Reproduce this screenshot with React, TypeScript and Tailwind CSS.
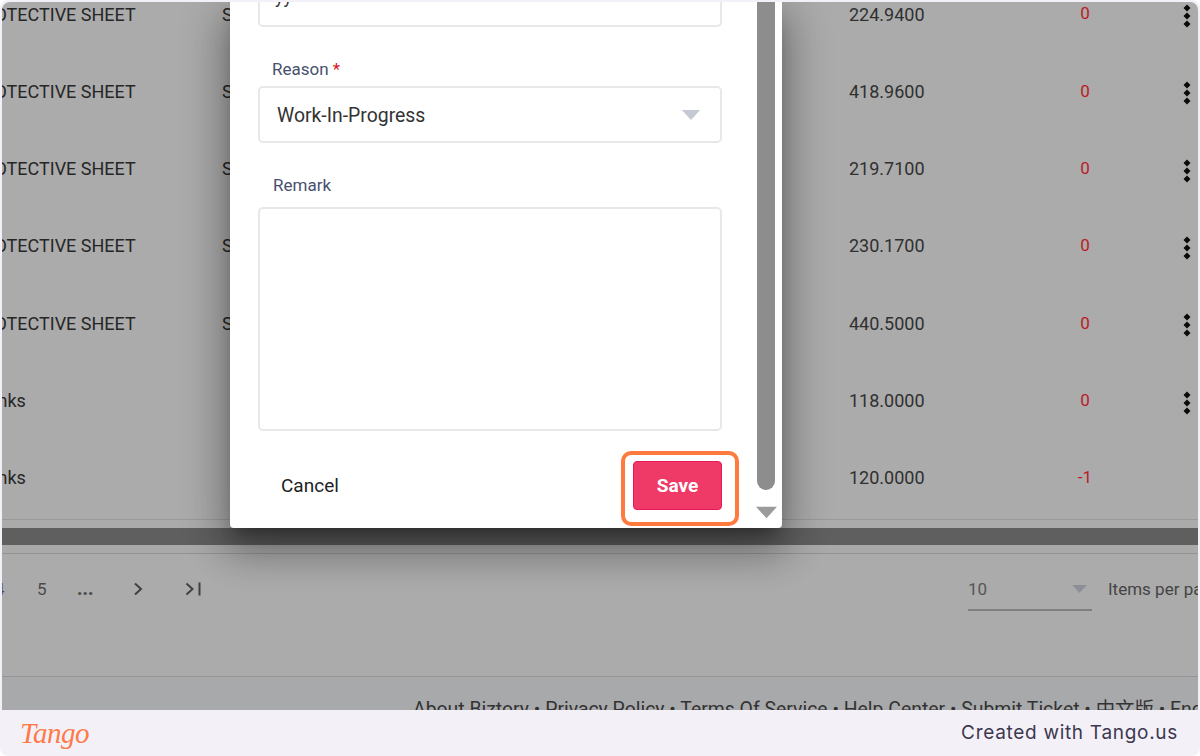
import React from "react";

const rows = [
  { name: "PROTECTIVE SHEET", code: "STD", price: "224.9400", qty: "0", dots: true },
  { name: "PROTECTIVE SHEET", code: "STD", price: "418.9600", qty: "0", dots: true },
  { name: "PROTECTIVE SHEET", code: "STD", price: "219.7100", qty: "0", dots: true },
  { name: "PROTECTIVE SHEET", code: "STD", price: "230.1700", qty: "0", dots: true },
  { name: "PROTECTIVE SHEET", code: "STD", price: "440.5000", qty: "0", dots: true },
  { name: "Planks", code: "", price: "118.0000", qty: "0", dots: true },
  { name: "Planks", code: "", price: "120.0000", qty: "-1", dots: false },
];

function Dots() {
  return (
    <svg width="10" height="24" viewBox="0 0 10 24" fill="#0a0a0a" className="mt-[4px]">
      <path d="M5 0.5 8.5 4 5 7.5 1.5 4Z" />
      <path d="M5 8.5 8.5 12 5 15.5 1.5 12Z" />
      <path d="M5 16.5 8.5 20 5 23.5 1.5 20Z" />
    </svg>
  );
}

function Triangle({ className }: { className: string }) {
  return (
    <svg viewBox="0 0 22 12" className={className} fill="currentColor">
      <path d="M0 0H22L11 12Z" />
    </svg>
  );
}

export default function App() {
  return (
    <div className="flex h-screen w-full flex-col overflow-hidden rounded-[8px] bg-[#f3f1f7] font-['Roboto',sans-serif]">
      <main className="relative mx-[2px] mt-[2px] min-h-0 flex-1 overflow-hidden rounded-t-[8px] bg-[#ababab] text-[#262626]">
        <div className="-mt-[26.67px] -ml-[30px]">
          {rows.map((r, i) => (
            <div key={i} className="flex h-[77.33px] items-center text-[18px]">
              <div className="w-[250px] shrink-0 whitespace-nowrap">{r.name}</div>
              <div className="w-[627px] shrink-0">{r.code}</div>
              <div className="w-[225px] shrink-0 text-[#303030]">{r.price}</div>
              <div className="ml-[1px] w-[20px] shrink-0 text-center text-[17px] text-[#bd1a28]">{r.qty}</div>
              <div className="ml-[84px] flex w-[16px] shrink-0 justify-center">{r.dots && <Dots />}</div>
            </div>
          ))}
        </div>

        <div className="mt-[2px] h-px bg-[#9a9a9a]" />
        <div className="mt-[8px] h-[17px] bg-[#5f5f5f]" />
        <div className="h-[8px] bg-[#a9a9a9]" />
        <div className="h-px bg-[#929292]" />

        <div className="flex h-[123px] items-start border-b border-[#959595] pt-[25px] text-[#4a4a4a]">
          <span className="-ml-[7px] w-[42px] shrink-0 text-[17px] leading-[20px]">4</span>
          <span className="w-[40px] shrink-0 text-[17px] leading-[20px]">5</span>
          <span className="w-[56px] shrink-0 text-[18px] font-black leading-[20px]">...</span>
          <svg width="10" height="14" viewBox="0 0 10 14" className="mt-[3px] shrink-0" fill="none" stroke="#404040" strokeWidth="2">
            <path d="M2 1.5 8 7 2 12.5" />
          </svg>
          <svg width="17" height="14" viewBox="0 0 17 14" className="mt-[3px] ml-[42px] shrink-0" fill="none" stroke="#404040" strokeWidth="2">
            <path d="M1.5 1.5 7.5 7 1.5 12.5M14.5 0.5V13.5" />
          </svg>
          <div className="relative ml-[766px] h-[32px] w-[124px] shrink-0 border-b-2 border-[#7f7f7f] text-[17px] leading-[20px] text-[#555]">
            10
            <Triangle className="absolute top-[6px] right-[5px] h-[8px] w-[15px] text-[#8d8f98]" />
          </div>
          <span className="ml-[16px] shrink-0 whitespace-nowrap text-[17px] leading-[20px] text-[#444]">Items per page</span>
        </div>

        <div className="h-[33px] overflow-hidden bg-[#a8a9ab] pt-[23px] pl-[411px] font-['Roboto','Noto_Sans_CJK_SC',sans-serif] text-[19.4px] leading-[20px] whitespace-nowrap text-[#333]">
          About Biztory • Privacy Policy • Terms Of Service • Help Center • Submit Ticket • 中文版 • English
        </div>

        <div className="absolute top-0 left-[228px] flex h-[526px] w-[552px] overflow-hidden rounded-b-[4px] bg-white shadow-[0_11px_15px_-7px_rgba(0,0,0,0.3),0_24px_38px_3px_rgba(0,0,0,0.22),0_9px_46px_8px_rgba(0,0,0,0.2)]">
          <div className="flex w-[527px] shrink-0 flex-col justify-end pr-[35px] pb-[18px] pl-[28px]">
            <div className="flex h-[30px] shrink-0 items-end overflow-hidden rounded-b-[5px] border-2 border-t-0 border-[#e8e8e8] pb-[19px] pl-[15px] text-[18px] leading-none text-[#333]">
              yy
            </div>
            <label className="mt-[32px] ml-[14px] shrink-0 text-[17px] leading-[20px] text-[#48506f]">
              Reason <span className="text-[#e01020]">*</span>
            </label>
            <div className="mt-[7px] flex h-[57px] shrink-0 items-center justify-between rounded-[5px] border-2 border-[#e8e8e8] pr-[18px] pl-[17px] text-[19.4px] text-[#333]">
              <span className="pt-[2px]">Work-In-Progress</span>
              <Triangle className="h-[10px] w-[22px] text-[#c5c9d3]" />
            </div>
            <label className="mt-[32px] ml-[15px] shrink-0 text-[17px] leading-[20px] text-[#48506f]">Remark</label>
            <div className="mt-[12px] h-[224px] shrink-0 rounded-[5px] border-2 border-[#e8e8e8]" />
            <div className="mt-[30px] flex shrink-0 items-center justify-between pl-[23px]">
              <button className="pt-[2px] text-[19px] text-[#222]">Cancel</button>
              <div className="relative">
                <button className="block h-[49px] w-[89px] rounded-[4px] border border-[#e8175a] bg-[#ef3a68] pt-[2px] text-[19px] font-bold text-white">
                  Save
                </button>
                <div className="absolute -top-[10px] -right-[17px] -bottom-[16px] -left-[12px] rounded-[10px] border-[4px] border-[#ff7a3f]" />
              </div>
            </div>
          </div>
          <div className="flex w-[18px] shrink-0 flex-col items-center">
            <div className="h-[488px] w-full shrink-0 rounded-b-[9px] bg-[#8d8d8d]" />
            <Triangle className="mt-[15px] h-[15px] w-[21px] shrink-0 text-[#9b9b9b]" />
          </div>
        </div>
      </main>

      <footer className="flex h-[46px] shrink-0 items-center justify-between pr-[22px] pl-[20px]">
        <span className="font-['Liberation_Serif',serif] text-[29px] leading-none font-normal tracking-[-0.5px] text-[#ff7a4a] italic">
          Tango
        </span>
        <span className="font-['Inter',sans-serif] text-[19px] tracking-[0.7px] text-[#3c3850]">Created with Tango.us</span>
      </footer>
    </div>
  );
}
